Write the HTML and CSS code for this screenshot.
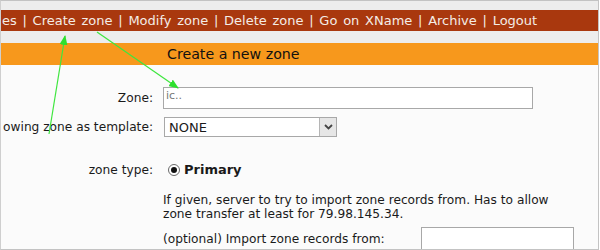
FILE: index.html
```html
<!DOCTYPE html>
<html>
<head>
<meta charset="utf-8">
<link rel="stylesheet" href="styles.css">
</head>
<body>
<div class="frame">
  <div class="strip"></div>
  <nav class="menu">es | Create zone | Modify zone | Delete zone | Go on XName | Archive | Logout</nav>
  <div class="strip strip-mid"></div>
  <div class="title">Create a new zone</div>
  <form class="form">
    <div class="row row-zone">
      <label class="lbl"><span>Zone:</span></label>
      <div class="field"><div class="input input-zone"><span class="ghost">ic..</span></div></div>
    </div>
    <div class="row row-tpl">
      <label class="lbl"><span>owing zone as template:</span></label>
      <div class="field">
        <div class="select"><span class="sel-text">NONE</span><span class="sel-btn"><svg width="9" height="6" viewBox="0 0 9 6"><path d="M1 1 L4.5 4.5 L8 1" fill="none" stroke="#444" stroke-width="1.8"/></svg></span></div>
      </div>
    </div>
    <div class="row row-type">
      <label class="lbl"><span>zone type:</span></label>
      <div class="field"><span class="radio"><span class="dot"></span></span><b class="primary">Primary</b></div>
    </div>
    <div class="row row-help">
      <div class="lbl"></div>
      <p class="help">If given, server to try to import zone records from. Has to allow zone transfer at least for 79.98.145.34.</p>
    </div>
    <div class="row row-import">
      <div class="lbl"></div>
      <div class="field"><span class="imp-text">(optional) Import zone records from:</span><div class="input input-import"></div></div>
    </div>
  </form>
  <svg class="arrows" width="600" height="250" viewBox="0 0 600 250">
    <defs>
      <marker id="ah" markerWidth="10" markerHeight="8" refX="9" refY="4" orient="auto" markerUnits="userSpaceOnUse">
        <path d="M0 0 L10 4 L0 8 Z" fill="#2ee02e"/>
      </marker>
    </defs>
    <line x1="49" y1="134" x2="65" y2="36" stroke="#3ee63e" stroke-width="1.2" marker-end="url(#ah)"/>
    <line x1="97" y1="32" x2="178" y2="88" stroke="#3ee63e" stroke-width="1.2" marker-end="url(#ah)"/>
  </svg>
</div>
</body>
</html>
```

FILE: styles.css
```css
html, body {
  margin: 0;
  padding: 0;
  background: #ffffff;
  overflow: hidden;
}
.frame {
  position: relative;
  width: 597px;
  height: 248px;
  border: 1px solid #c3c3c3;
  border-left-color: #cfcfcf;
  background: #fbfbfb;
  overflow: hidden;
  font-family: "DejaVu Sans", Verdana, sans-serif;
  color: #1a1a1a;
}
.strip {
  height: 9px;
  background: #ededed;
}
.strip-mid {
  height: 12px;
}
.menu {
  height: 21px;
  line-height: 21px;
  background: #a9380e;
  color: #f4ece6;
  font-size: 13px;
  word-spacing: 1.6px;
  white-space: nowrap;
  padding-left: 1px;
}
.title {
  height: 22px;
  line-height: 23px;
  background: #f7981c;
  color: #111;
  font-size: 14.2px;
  padding-left: 166px;
}
.form {
  display: flex;
  flex-direction: column;
  padding-top: 22px;
  font-size: 12.2px;
}
.row {
  display: grid;
  grid-template-columns: 152px 1fr;
  column-gap: 10px;
  align-items: center;
}
.lbl {
  display: flex;
  justify-content: flex-end;
  white-space: nowrap;
}
.row-tpl { margin-top: 8px; }
.row-type { margin-top: 25px; }
.row-help { margin-top: 16px; }
.row-import { margin-top: 6px; }
.field {
  display: flex;
  align-items: center;
}
.input {
  box-sizing: border-box;
  height: 22px;
  border: 1px solid #a8a8a8;
  background: #fff;
}
.input-zone {
  width: 370px;
  padding-left: 2px;
  font-size: 11px;
  line-height: 14px;
  color: #777;
  overflow: hidden;
}
.ghost {
  display: block;
  margin-top: 1px;
}
.select {
  box-sizing: border-box;
  margin-left: 1px;
  width: 173px;
  height: 20px;
  border: 1px solid #a8a8a8;
  background: #fff;
  display: flex;
  align-items: center;
  justify-content: space-between;
  font-size: 13px;
}
.sel-text {
  padding-left: 4px;
}
.sel-btn {
  box-sizing: border-box;
  width: 17px;
  height: 18px;
  background: #e6e6e6;
  border-left: 1px solid #b5b5b5;
  display: flex;
  align-items: center;
  justify-content: center;
}
.radio {
  box-sizing: border-box;
  margin-left: 5px;
  width: 12px;
  height: 12px;
  border: 1px solid #6a6a6a;
  border-radius: 50%;
  background: #fff;
  display: flex;
  align-items: center;
  justify-content: center;
}
.dot {
  width: 6px;
  height: 6px;
  border-radius: 50%;
  background: #111;
}
.primary {
  margin-left: 4px;
  font-size: 13px;
  font-weight: bold;
}
.help {
  margin: 0;
  width: 405px;
  line-height: 14px;
}
.imp-text {
  width: 258px;
}
.input-import {
  width: 153px;
  height: 24px;
}
.arrows {
  position: absolute;
  left: -1px;
  top: -1px;
  pointer-events: none;
}
```
